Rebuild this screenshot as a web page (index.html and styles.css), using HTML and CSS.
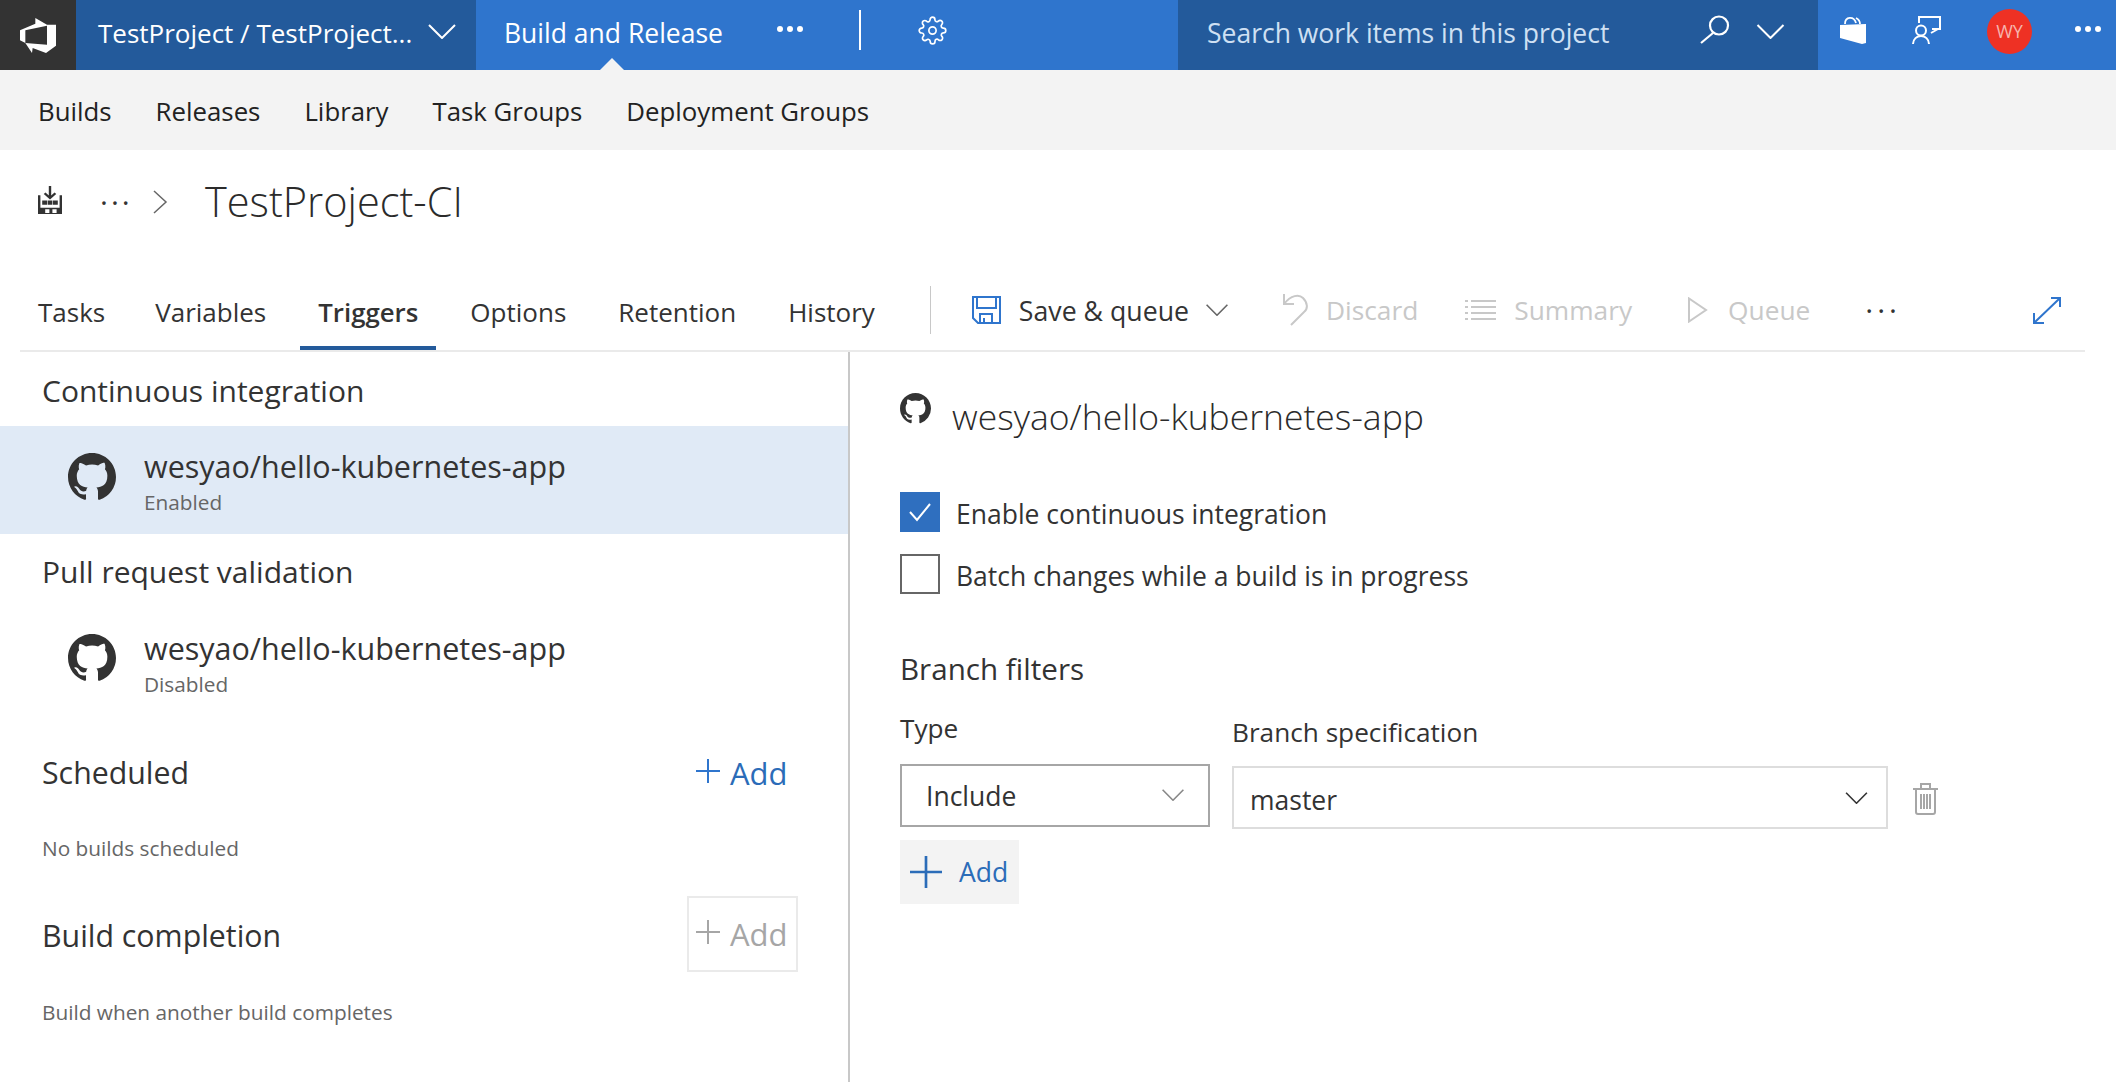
FILE: index.html
```html
<!DOCTYPE html>
<html lang="en">
<head>
    <meta charset="UTF-8">
    <title>TestProject-CI</title>
    <link rel="stylesheet" href="styles.css">
</head>
<body>
    <svg class="icon-defs" width="0" height="0">
        <defs>
            <symbol id="github" viewBox="0 0 16 16">
                <path fill="currentColor" d="M8 0C3.58 0 0 3.58 0 8c0 3.54 2.29 6.53 5.47 7.59.4.07.55-.17.55-.38 0-.19-.01-.82-.01-1.49-2.01.37-2.53-.49-2.69-.94-.09-.23-.48-.94-.82-1.13-.28-.15-.68-.52-.01-.53.63-.01 1.08.58 1.23.82.72 1.21 1.87.87 2.33.66.07-.52.28-.87.51-1.07-1.78-.2-3.64-.89-3.64-3.95 0-.87.31-1.59.82-2.15-.08-.2-.36-1.02.08-2.12 0 0 .67-.21 2.2.82.64-.18 1.32-.27 2-.27.68 0 1.36.09 2 .27 1.53-1.04 2.2-.82 2.2-.82.44 1.1.16 1.92.08 2.12.51.56.82 1.27.82 2.15 0 3.07-1.87 3.75-3.65 3.95.29.25.54.73.54 1.48 0 1.07-.01 1.93-.01 2.2 0 .21.15.46.55.38A8.013 8.013 0 0016 8c0-4.42-3.58-8-8-8z"/>
            </symbol>
            <symbol id="chevron" viewBox="0 0 28 15">
                <path fill="none" stroke="currentColor" stroke-width="2" d="M1 1l13 13L27 1"/>
            </symbol>
            <symbol id="plus" viewBox="0 0 24 24">
                <path fill="none" stroke="currentColor" stroke-width="2" d="M12 0v24M0 12h24"/>
            </symbol>
        </defs>
    </svg>

    <!-- Top bar -->
    <header class="topbar">
        <div class="logo">
            <svg width="36" height="35" viewBox="54 35 108 105">
                <path fill="#fff" fill-rule="evenodd" d="M54 72l46-20V35l35 20h27v63l-30 22-40-15-2 15-20-30-16-8zM70 72v38l65 5V58z"/>
            </svg>
        </div>
        <div class="project">
            <span>TestProject / TestProject...</span>
            <svg class="chev-top" width="28" height="15"><use href="#chevron"/></svg>
        </div>
        <nav class="hub">
            <span class="hub-item">Build and Release</span>
            <span class="dots dots-hub"><i></i><i></i><i></i></span>
            <span class="hub-divider"></span>
            <svg class="gear" width="29" height="29" viewBox="0 0 24 24" fill="none" stroke="#fff" stroke-width="1.4">
                <circle cx="12" cy="12" r="3"/>
                <path d="M19.4 15a1.65 1.65 0 0 0 .33 1.82l.06.06a2 2 0 0 1 0 2.83 2 2 0 0 1-2.83 0l-.06-.06a1.65 1.65 0 0 0-1.82-.33 1.65 1.65 0 0 0-1 1.51V21a2 2 0 0 1-2 2 2 2 0 0 1-2-2v-.09A1.65 1.65 0 0 0 9 19.4a1.65 1.65 0 0 0-1.82.33l-.06.06a2 2 0 0 1-2.83 0 2 2 0 0 1 0-2.83l.06-.06a1.65 1.65 0 0 0 .33-1.82 1.65 1.65 0 0 0-1.51-1H3a2 2 0 0 1-2-2 2 2 0 0 1 2-2h.09A1.65 1.65 0 0 0 4.6 9a1.65 1.65 0 0 0-.33-1.82l-.06-.06a2 2 0 0 1 0-2.83 2 2 0 0 1 2.83 0l.06.06a1.65 1.65 0 0 0 1.82.33H9a1.65 1.65 0 0 0 1-1.51V3a2 2 0 0 1 2-2 2 2 0 0 1 2 2v.09a1.65 1.65 0 0 0 1 1.51 1.65 1.65 0 0 0 1.82-.33l.06-.06a2 2 0 0 1 2.83 0 2 2 0 0 1 0 2.83l-.06.06a1.65 1.65 0 0 0-.33 1.82V9a1.65 1.65 0 0 0 1.51 1H21a2 2 0 0 1 2 2 2 2 0 0 1-2 2h-.09a1.65 1.65 0 0 0-1.51 1z"/>
            </svg>
        </nav>
        <div class="search">
            <span class="search-text">Search work items in this project</span>
            <svg class="search-icon" width="31" height="29" viewBox="0 0 31 29" fill="none" stroke="#fff" stroke-width="2.2">
                <circle cx="20" cy="10.500" r="9"/>
                <path d="M14 18L2 28"/>
            </svg>
            <svg class="chev-search" width="29" height="15"><use href="#chevron"/></svg>
        </div>
        <div class="user-area">
            <svg class="bag" width="26" height="28" viewBox="0 0 26 28">
                <path fill="#fff" d="M0 9l26-1v19l-4 1-22-6z"/>
                <path fill="none" stroke="#fff" stroke-width="1.8" d="M5 8C5 0 14 0 16 7M16 2c2 1 4 2 4 6"/>
            </svg>
            <svg class="person" width="29" height="28" viewBox="0 0 29 28" fill="none" stroke="#fff" stroke-width="2">
                <path d="M7 7V1h21v12h-8M26 13l-7 4"/>
                <circle cx="9" cy="14.500" r="5"/>
                <path d="M1 28c0-5 4-8 8-8s8 3 8 8"/>
            </svg>
            <span class="avatar">WY</span>
            <span class="dots dots-user"><i></i><i></i><i></i></span>
        </div>
    </header>

    <!-- Hub groups -->
    <nav class="subnav">
        <a>Builds</a>
        <a>Releases</a>
        <a>Library</a>
        <a>Task Groups</a>
        <a>Deployment Groups</a>
    </nav>

    <!-- Breadcrumb and title -->
    <div class="titlebar">
        <svg class="build-icon" width="24" height="28" viewBox="0 0 20 27" preserveAspectRatio="none">
            <path fill="none" stroke="#333" stroke-width="2" d="M10 0v11M5.500 7l4.500 4.500L14.500 7"/>
            <path fill="#333" fill-rule="evenodd" d="M0 9h2v12h16V9h2v18H0zM6 22.500v3.500h3.500v-3.500zM12 22.500v3.500h3.500v-3.500z"/>
            <path fill="#333" d="M3.500 14h4v4h-4zM8 14h4v4H8zM12.500 14h4v4h-4z"/>
        </svg>
        <span class="crumb-dots">···</span>
        <svg class="crumb-sep" width="15" height="24" viewBox="0 0 15 24">
            <path fill="none" stroke="#666" stroke-width="1.500" d="M1 1l12 11L1 23"/>
        </svg>
        <h1>TestProject-CI</h1>
    </div>

    <!-- Tabs and commands -->
    <div class="toolbar">
        <a class="tab">Tasks</a>
        <a class="tab">Variables</a>
        <a class="tab active">Triggers</a>
        <a class="tab">Options</a>
        <a class="tab">Retention</a>
        <a class="tab">History</a>
        <span class="tool-divider"></span>
        <div class="cmd cmd-save">
            <svg width="29" height="28" viewBox="0 0 29 28" fill="none" stroke="#2f75cd" stroke-width="2">
                <path d="M1 1h27v26H6l-5-5z"/>
                <path d="M5 1v11h19V1M8 27v-9h12v9M12 22v5"/>
            </svg>
            <span>Save &amp; queue</span>
            <svg class="chev-save" width="24" height="12"><use href="#chevron"/></svg>
        </div>
        <div class="cmd cmd-off cmd-discard">
            <svg width="25" height="32" viewBox="0 0 25 32" fill="none" stroke="#c8c8c8" stroke-width="2">
                <path d="M1 0v10h10M1 10C8 1 16 0 20 4c5 5 5 11 1 14L8 31"/>
            </svg>
            <span>Discard</span>
        </div>
        <div class="cmd cmd-off cmd-summary">
            <svg width="31" height="20" viewBox="0 0 31 20" fill="none" stroke="#c8c8c8" stroke-width="2">
                <path d="M0 1h3M6 1h25M0 7h3M6 7h25M0 13h3M6 13h25M0 19h3M6 19h25"/>
            </svg>
            <span>Summary</span>
        </div>
        <div class="cmd cmd-off cmd-queue">
            <svg width="20" height="26" viewBox="0 0 20 26" fill="none" stroke="#c8c8c8" stroke-width="2">
                <path d="M1 1.500v23L18 13z"/>
            </svg>
            <span>Queue</span>
        </div>
        <span class="cmd-more">···</span>
        <svg class="expand" width="28" height="27" viewBox="0 0 28 27" fill="none" stroke="#2f75cd" stroke-width="2">
            <path d="M2 25L26 2M18 1h9v9M1 16v10h10"/>
        </svg>
    </div>

    <main class="content">
        <!-- Trigger list -->
        <section class="triggers">
            <h2 class="group-title">Continuous integration</h2>
            <div class="repo-row selected">
                <svg class="repo-icon"><use href="#github"/></svg>
                <div>
                    <div class="repo-name">wesyao/hello-kubernetes-app</div>
                    <div class="repo-state">Enabled</div>
                </div>
            </div>
            <h2 class="group-title second">Pull request validation</h2>
            <div class="repo-row">
                <svg class="repo-icon"><use href="#github"/></svg>
                <div>
                    <div class="repo-name">wesyao/hello-kubernetes-app</div>
                    <div class="repo-state">Disabled</div>
                </div>
            </div>
            <div class="add-row scheduled">
                <h2>Scheduled</h2>
                <a class="add-link">
                    <svg width="24" height="24"><use href="#plus"/></svg>
                    <span>Add</span>
                </a>
            </div>
            <p class="note note-scheduled">No builds scheduled</p>
            <div class="add-row completion">
                <h2>Build completion</h2>
                <a class="add-link disabled">
                    <svg width="24" height="24"><use href="#plus"/></svg>
                    <span>Add</span>
                </a>
            </div>
            <p class="note note-completion">Build when another build completes</p>
        </section>

        <!-- Trigger details -->
        <section class="details">
            <div class="detail-head">
                <svg class="detail-icon"><use href="#github"/></svg>
                <h2>wesyao/hello-kubernetes-app</h2>
            </div>
            <label class="check first">
                <span class="box checked">
                    <svg width="24" height="20" viewBox="0 0 24 20" fill="none" stroke="#fff" stroke-width="2">
                        <path d="M2 10l7 8L22 2"/>
                    </svg>
                </span>
                <span class="check-text">Enable continuous integration</span>
            </label>
            <label class="check">
                <span class="box"></span>
                <span class="check-text">Batch changes while a build is in progress</span>
            </label>
            <h3>Branch filters</h3>
            <div class="filter-row">
                <div class="field field-type">
                    <div class="field-label">Type</div>
                    <div class="select select-type">
                        <span>Include</span>
                        <svg width="24" height="12"><use href="#chevron"/></svg>
                    </div>
                </div>
                <div class="field field-branch">
                    <div class="field-label">Branch specification</div>
                    <div class="select select-branch">
                        <span>master</span>
                        <svg width="23" height="12"><use href="#chevron"/></svg>
                    </div>
                </div>
                <svg class="trash" width="25" height="32" viewBox="0 0 25 32" fill="none" stroke="#a6a6a6" stroke-width="2">
                    <path d="M0 6h25M8 6V1h9v5M3 6v23a2 2 0 0 0 2 2h15a2 2 0 0 0 2-2V6M8 11v15M11 11v15M14 11v15M17 11v15"/>
                </svg>
            </div>
            <a class="add-filter">
                <svg width="32" height="32"><use href="#plus"/></svg>
                <span>Add</span>
            </a>
        </section>
    </main>
</body>
</html>
```

FILE: styles.css
```css
* {
    box-sizing: border-box;
}
body {
    margin: 0;
    height: 1082px;
    overflow: hidden;
    background: #fff;
    color: #333;
    font-family: "Open Sans", "Noto Sans", sans-serif;
}
h1, h2, h3, p {
    margin: 0;
    font-weight: 400;
}
svg {
    display: block;
    flex: none;
}
.icon-defs {
    position: absolute;
}

/* Top bar */
.topbar {
    display: flex;
    height: 70px;
    color: #fff;
    font-size: 26.5px;
    background: #2f75cd;
}
.logo {
    display: flex;
    align-items: center;
    justify-content: center;
    width: 76px;
    background: #333;
}
.project {
    display: flex;
    align-items: center;
    width: 400px;
    padding-left: 22px;
    background: #235a9b;
    font-size: 26px;
}
.project span, .hub-item, .search-text {
    padding-bottom: 4px;
}
.chev-top {
    margin-left: 16px;
    margin-top: -8px;
}
.hub {
    display: flex;
    align-items: center;
    width: 702px;
    padding-left: 28px;
}
.hub-item {
    position: relative;
    display: flex;
    align-items: center;
    height: 70px;
}
.hub-item::after {
    content: "";
    position: absolute;
    left: 96px;
    bottom: 0;
    border-left: 12px solid transparent;
    border-right: 12px solid transparent;
    border-bottom: 12px solid #f3f3f3;
}
.dots {
    display: flex;
    gap: 4px;
}
.dots i {
    width: 6px;
    height: 6px;
    border-radius: 50%;
    background: #fff;
}
.dots-hub {
    margin-left: 54px;
    margin-top: -12px;
}
.hub-divider {
    width: 2px;
    height: 40px;
    margin-left: 56px;
    margin-top: -10px;
    background: #fff;
}
.gear {
    margin-left: 57px;
    margin-top: -10px;
}
.search {
    display: flex;
    align-items: center;
    width: 640px;
    padding: 0 33px 0 29px;
    background: #235a9b;
    color: #cfe0f3;
}
.search-icon {
    margin-left: auto;
    margin-top: -12px;
}
.chev-search {
    margin-left: 26px;
    margin-top: -8px;
    color: #fff;
}
.user-area {
    display: flex;
    align-items: center;
    padding-left: 22px;
}
.bag {
    margin-top: -10px;
}
.person {
    margin-left: 46px;
    margin-top: -10px;
}
.avatar {
    display: flex;
    align-items: center;
    justify-content: center;
    width: 45px;
    height: 45px;
    margin-left: 46px;
    margin-top: -8px;
    border-radius: 50%;
    background: #ee3124;
    color: #f6b5ae;
    font-size: 18px;
}
.dots-user {
    margin-left: 43px;
    margin-top: -12px;
}

/* Hub groups */
.subnav {
    display: flex;
    align-items: center;
    gap: 44px;
    height: 80px;
    padding: 2px 0 0 38px;
    background: #f3f3f3;
    color: #222;
    font-size: 25.8px;
}

/* Title */
.titlebar {
    display: flex;
    align-items: center;
    height: 120px;
    padding: 0 0 16px 38px;
}
.build-icon {
    margin-top: -4px;
}
.crumb-dots {
    margin-left: 38px;
    width: 36px;
    font-size: 30px;
    line-height: 30px;
    letter-spacing: 3px;
}
.crumb-sep {
    margin-left: 17px;
}
h1 {
    margin-left: 37px;
    margin-top: -3px;
    font-size: 41.500px;
    font-weight: 300;
    line-height: 50px;
    color: #2b2b2b;
}

/* Tabs and commands */
.toolbar {
    display: flex;
    align-items: center;
    height: 82px;
    margin: 0 31px 0 20px;
    border-bottom: 2px solid #eaeaea;
    font-size: 26.3px;
}
.tab {
    height: 80px;
    margin-right: 16px;
    padding: 8px 18px 0;
    border-bottom: 4px solid transparent;
    font-size: 26px;
    line-height: 68px;
}
.tab:first-child {
    margin-right: 14px;
}
.tab.active {
    border-bottom-color: #235a9b;
    font-size: 25.8px;
    font-weight: 600;
}
.tool-divider {
    width: 1px;
    height: 48px;
    margin-left: 21px;
    background: #c8c8c8;
}
.cmd {
    display: flex;
    align-items: center;
    gap: 18px;
}
.cmd-off {
    color: #c8c8c8;
}
.cmd-save {
    margin-left: 41px;
    font-size: 26.7px;
}
.chev-save {
    margin-left: -2px;
    color: #666;
}
.cmd-discard {
    margin-left: 54px;
}
.cmd-summary {
    margin-left: 47px;
}
.cmd-queue {
    margin-left: 56px;
    gap: 20px;
}
.cmd-more {
    margin-left: 55px;
    font-size: 30px;
    line-height: 30px;
    letter-spacing: 4px;
}
.expand {
    margin-left: auto;
    margin-right: 24px;
}

/* Trigger list */
.content {
    display: flex;
    height: 730px;
}
.triggers {
    width: 850px;
    border-right: 2px solid #c8c8c8;
}
.group-title {
    height: 74px;
    padding: 19px 0 0 42px;
    font-size: 30px;
    line-height: 40px;
}
.group-title.second {
    height: 73px;
    padding-top: 18px;
}
.repo-row {
    display: flex;
    height: 108px;
    padding-left: 68px;
}
.repo-row.selected {
    background: #e0eaf6;
}
.repo-icon {
    width: 48px;
    height: 48px;
    margin: 27px 28px 0 0;
}
.repo-name {
    padding-top: 21px;
    font-size: 30.5px;
    line-height: 40px;
}
.selected .repo-name {
    padding-top: 20px;
}
.repo-state, .note {
    color: #666;
    font-size: 20.8px;
    line-height: 30px;
}
.repo-state {
    padding-top: 1px;
}
.add-row {
    display: flex;
    align-items: center;
    justify-content: space-between;
    height: 76px;
    padding: 0 50px 0 42px;
}
.add-row.scheduled {
    margin-top: 20px;
}
.scheduled h2 {
    margin-top: -2px;
}
.add-row.completion {
    margin-top: 33px;
}
.completion h2 {
    margin-top: 2px;
}
.add-row h2 {
    font-size: 30.3px;
}
.add-link {
    display: flex;
    align-items: center;
    gap: 10px;
    width: 111px;
    height: 76px;
    padding-left: 7px;
    border: 2px solid transparent;
    color: #2b6cb8;
    font-size: 31px;
}
.add-link svg {
    color: #2f75cd;
    margin-top: -4px;
}
.add-link.disabled {
    border-color: #eaeaea;
    color: #a6a6a6;
}
.add-link.disabled svg {
    color: #a6a6a6;
}
.note {
    padding-left: 42px;
}
.note-scheduled {
    margin-top: 22px;
}
.note-completion {
    margin-top: 25px;
}

/* Trigger details */
.details {
    flex: 1;
    padding: 42px 0 0 50px;
    font-size: 26.5px;
}
.detail-head {
    display: flex;
    height: 50px;
}
.detail-icon {
    width: 31px;
    height: 31px;
    margin: -1px 21px 0 0;
}
.detail-head h2 {
    margin-top: -3px;
    font-size: 35.5px;
    font-weight: 300;
    line-height: 50px;
    color: #2b2b2b;
}
.check {
    display: flex;
    align-items: center;
    height: 40px;
    margin-top: 22px;
}
.check.first {
    margin-top: 48px;
}
.box {
    display: flex;
    align-items: center;
    justify-content: center;
    width: 40px;
    height: 40px;
    border: 2px solid #666;
}
.box.checked {
    border: none;
    background: #2f6fbf;
}
.check-text {
    margin-left: 16px;
    padding-top: 3px;
}
h3 {
    margin-top: 55px;
    font-size: 29.6px;
    line-height: 40px;
}
.filter-row {
    display: flex;
    align-items: flex-start;
    margin-top: 26px;
}
.field-label {
    font-size: 26.2px;
    line-height: 30px;
}
.field-type {
    width: 310px;
}
.field-type .field-label {
    margin-top: -2px;
}
.field-type .select {
    margin-top: 21px;
}
.field-branch {
    width: 656px;
    margin-left: 22px;
    padding-top: 2px;
}
.select {
    display: flex;
    align-items: center;
    justify-content: space-between;
    height: 63px;
    background: #fff;
}
.select-type {
    padding: 0 23px 0 24px;
    border: 2px solid #a6a6a6;
}
.select-type svg {
    color: #888;
    margin-top: -2px;
}
.field-branch .select {
    margin-top: 19px;
}
.select-branch {
    padding: 0 18px 0 16px;
    border: 2px solid #ddd;
}
.select-branch span {
    padding-top: 5px;
}
.trash {
    margin: 68px 0 0 25px;
}
.add-filter {
    display: flex;
    align-items: center;
    gap: 17px;
    width: 119px;
    height: 64px;
    margin-top: 11px;
    padding-left: 10px;
    background: #f3f3f3;
    color: #2b6cb8;
}
.add-filter span {
    padding-bottom: 1px;
}
```
